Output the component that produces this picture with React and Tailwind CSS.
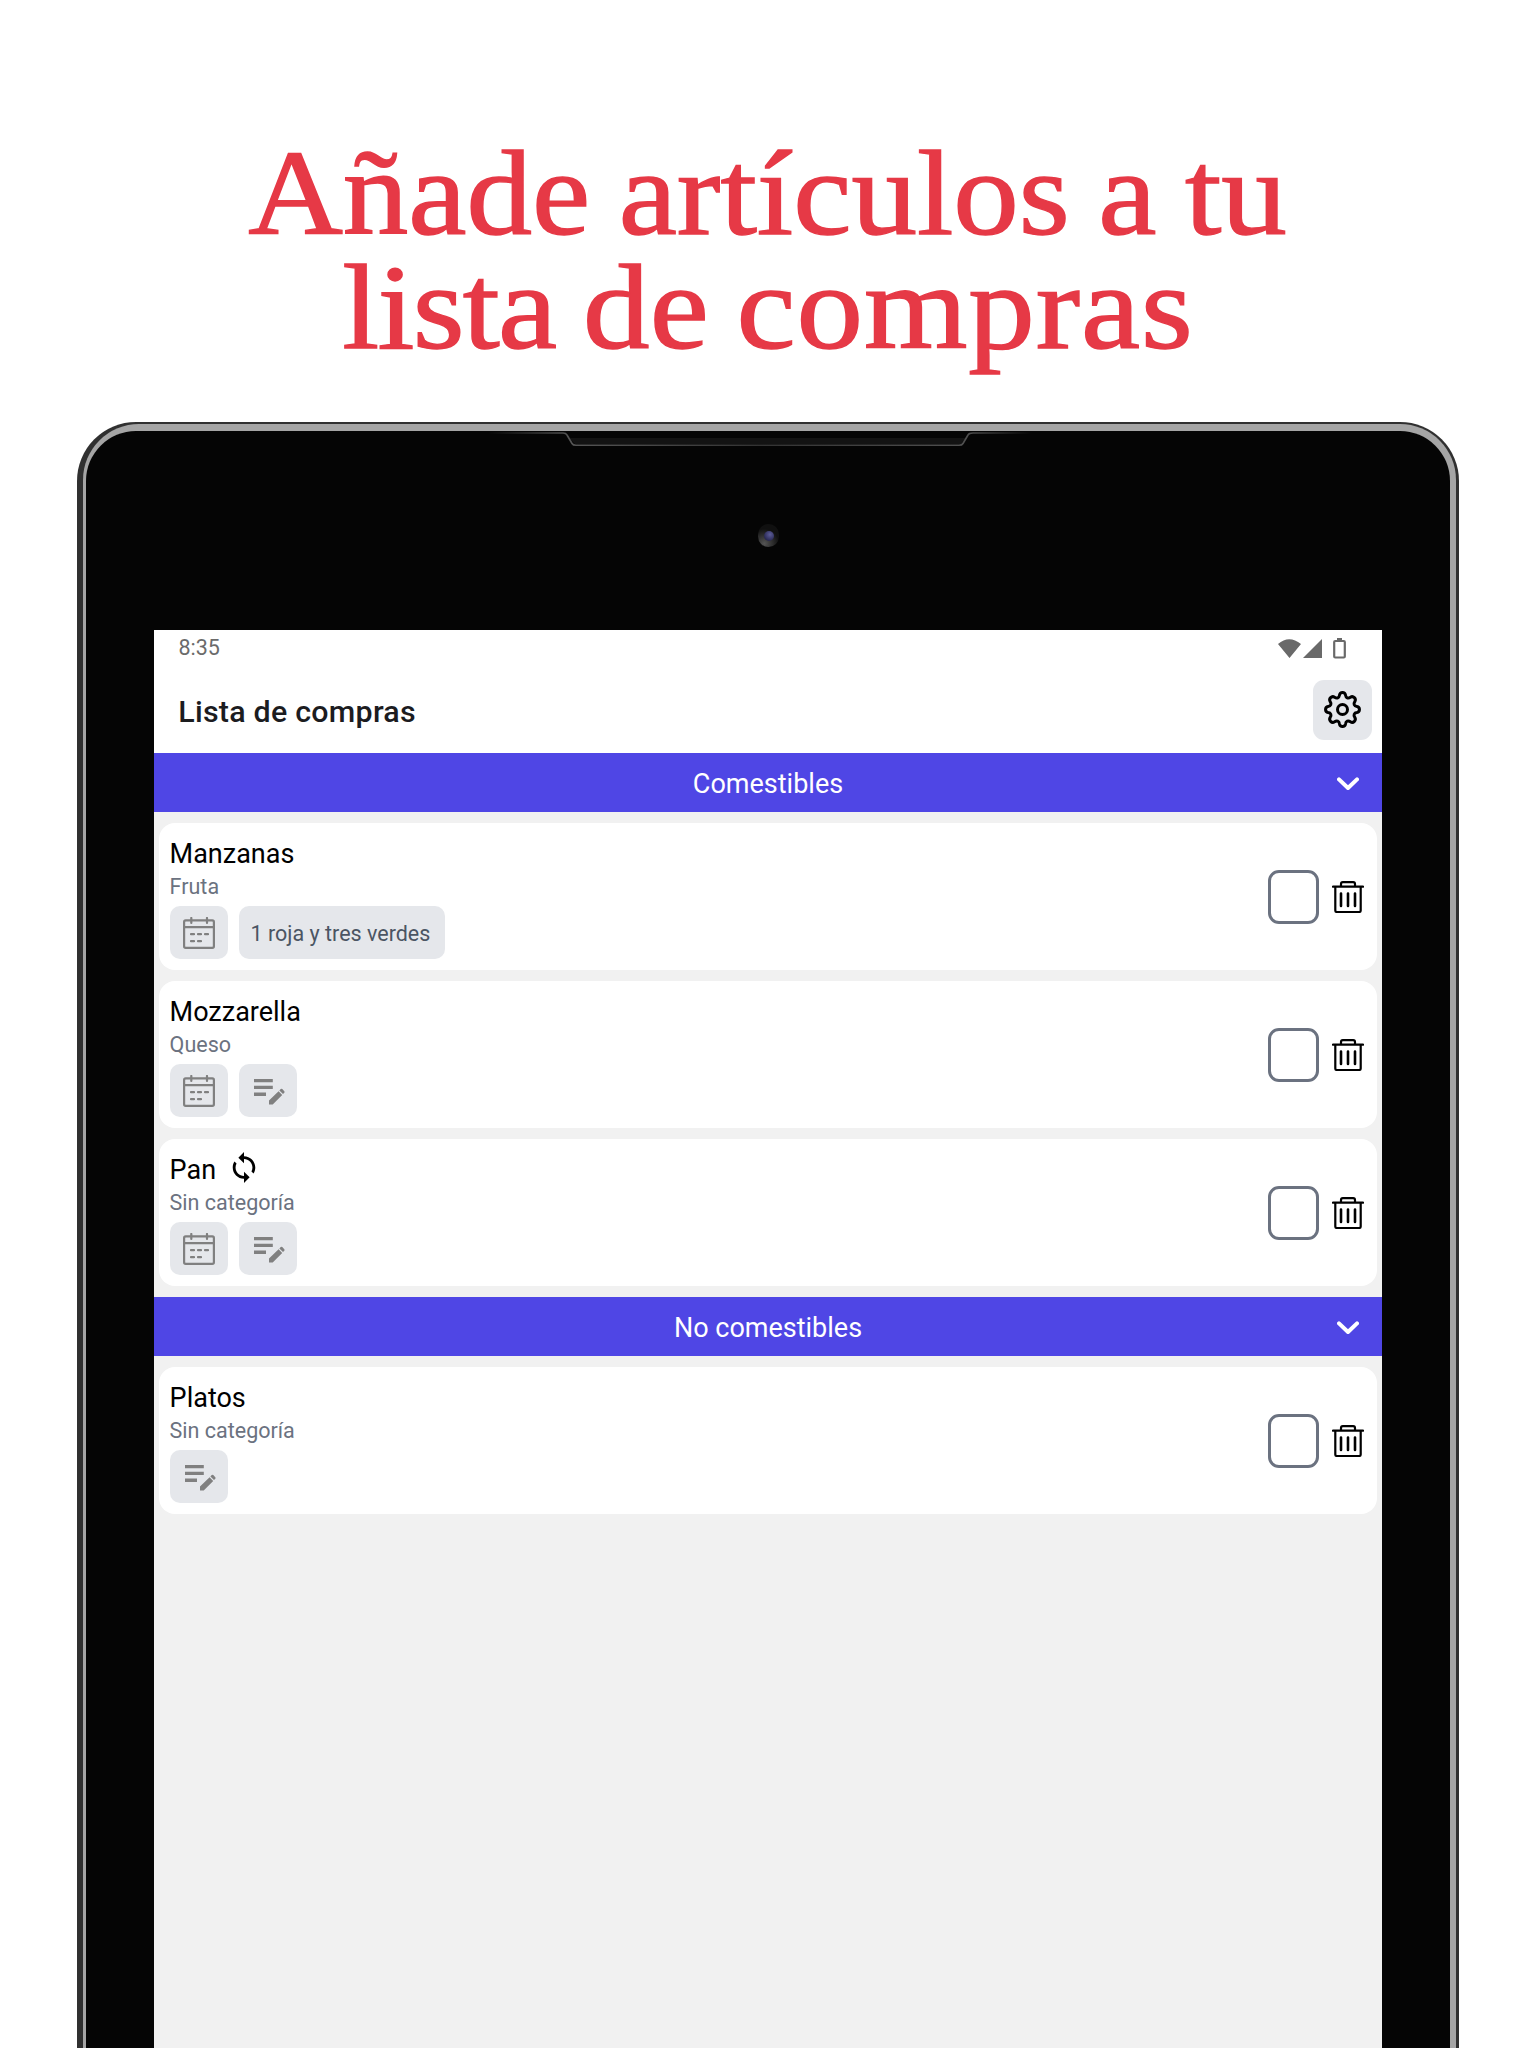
import React from "react";

function Gear() {
  return (
    <svg viewBox="-0.5 -0.5 37 37" className="mb-px h-[37px] w-[37px]" fill="none" stroke="#000" strokeWidth="3" strokeLinejoin="round">
      <circle cx="18" cy="18" r="5" />
      <path d="M15 3.6C15.6 0.2 20.4 0.2 21 3.6C21.4 6.4 23.6 7.3 25.9 5.7C28.8 3.9 32.1 7.2 30.3 10.1C28.7 12.4 29.6 14.6 32.4 15C35.8 15.6 35.8 20.4 32.4 21C29.6 21.4 28.7 23.6 30.3 25.9C32.1 28.8 28.8 32.1 25.9 30.3C23.6 28.7 21.4 29.6 21 32.4C20.4 35.8 15.6 35.8 15 32.4C14.6 29.6 12.4 28.7 10.1 30.3C7.2 32.1 3.9 28.8 5.7 25.9C7.3 23.6 6.4 21.4 3.6 21C0.2 20.4 0.2 15.6 3.6 15C6.4 14.6 7.3 12.4 5.7 10.1C3.9 7.2 7.2 3.9 10.1 5.7C12.4 7.3 14.6 6.4 15 3.6Z" />
    </svg>
  );
}

function Trash() {
  return (
    <svg viewBox="0 0 32 32" className="h-8 w-8" fill="none" stroke="#000" strokeWidth="2.2" strokeLinecap="round" strokeLinejoin="round">
      <path d="M1 5.6H31M3.3 6V29.5Q3.3 31 4.8 31H27.2Q28.7 31 28.7 29.5V6M9 5V3Q9 1.2 10.8 1.2H21.2Q23 1.2 23 3V5" />
      <path d="M9 12.5V25M16 12.5V25M23 12.5V25" strokeWidth="2.6" />
    </svg>
  );
}

function CalendarIcon() {
  return (
    <svg viewBox="0 0 32 32" className="h-8 w-8" fill="none" stroke="#808080" strokeWidth="2.2" strokeLinecap="round">
      <rect x="1.1" y="3.4" width="29.8" height="27.4" rx="1.5" />
      <path d="M1 10.2H31M8.3 1V6M24 1V6M8 17.2h3M15 17.2h3M22 17.2h3M8 24.2h3M15 24.2h3" />
    </svg>
  );
}

function NoteIcon() {
  return (
    <svg viewBox="0 0 32 28" className="ml-[3px] mt-px h-7 w-8" fill="#808080">
      <path d="M1 1.9h18.8v3.4H1zM1 8.7h18.8v3.4H1zM1 15.5h12v3.4H1z" />
      <path d="M16 27.5v-3.9L25.6 14.3l3.6 3.7-9.5 9.5zM26.4 13.4l1.3-1.3q.8-.7 1.6 0l2 2.1q.7.8 0 1.5L30 17.1z" />
    </svg>
  );
}

function SyncIcon() {
  return (
    <svg viewBox="4 1 16 22" className="mb-[6px] ml-[15.5px] h-[31px] w-[24px]" fill="#000">
      <path d="M12 4V1L8 5l4 4V6c3.31 0 6 2.69 6 6 0 1.01-.25 1.97-.7 2.8l1.46 1.46C19.54 15.03 20 13.57 20 12c0-4.42-3.58-8-8-8zm0 14c-3.31 0-6-2.69-6-6 0-1.01.25-1.97.7-2.8L5.24 7.74C4.46 8.97 4 10.43 4 12c0 4.42 3.58 8 8 8v3l4-4-4-4v3z" />
    </svg>
  );
}

function Section({ title }) {
  return (
    <div className="relative flex h-[59px] items-center justify-center bg-[#4f46e5] pt-[3px] text-[27px] text-white">
      {title}
      <svg viewBox="0 0 22 14" className="absolute right-[23.5px] top-[24px] h-[14px] w-[22px]" fill="none" stroke="#fff" strokeWidth="4" strokeLinecap="round" strokeLinejoin="round">
        <path d="M2 2.4L11 11L20 2.4" />
      </svg>
    </div>
  );
}

function Item({ name, category, calendar, note, recurring }) {
  return (
    <div className="flex h-[147px] items-center justify-between rounded-2xl bg-white pl-[10.6px] pr-[13px]">
      <div className="flex h-full flex-col pt-[13px]">
        <div className="flex h-[36px] items-center text-[27px] text-black">
          {name}
          {recurring && <SyncIcon />}
        </div>
        <div className="h-[34px] pt-[0.4px] text-[21.5px] leading-[30px] text-[#6b7280]">{category}</div>
        <div className="flex gap-[11px]">
          {calendar && (
            <div className="flex h-[53px] w-[58px] items-center justify-center rounded-[10px] bg-[#e5e7eb]">
              <CalendarIcon />
            </div>
          )}
          {note ? (
            <div className="flex h-[53px] items-center rounded-[10px] bg-[#e5e7eb] pl-[12px] pr-[15px] pt-[3px] text-[21.5px] text-[#4b5563]">{note}</div>
          ) : (
            <div className="flex h-[53px] w-[58px] items-center justify-center rounded-[10px] bg-[#e5e7eb]">
              <NoteIcon />
            </div>
          )}
        </div>
      </div>
      <div className="flex items-center gap-[13px]">
        <div className="h-[54px] w-[51px] rounded-[11px] border-3 border-[#6b7280]" />
        <Trash />
      </div>
    </div>
  );
}

function Bezel() {
  return (
    <div className="relative h-[199px]">
      <svg viewBox="0 0 560 24" className="absolute left-[326px] top-0 h-[24px] w-[560px]" fill="none">
        <defs>
          <linearGradient id="lip" x1="0" x2="1">
            <stop offset="0" stopColor="#050505" />
            <stop offset=".15" stopColor="#555" />
            <stop offset=".5" stopColor="#333" />
            <stop offset=".88" stopColor="#505050" />
            <stop offset="1" stopColor="#050505" />
          </linearGradient>
        </defs>
        <path d="M89 7H486L481 13H95Z" fill="#131313" />
        <path d="M8 2H83Q86 2 87 4L92 12.5Q93 14.3 96 14.3H479Q482 14.3 483 12.5L488 4Q489 2 493 2H552" stroke="url(#lip)" strokeWidth="1.6" />
      </svg>
      <div className="absolute left-[604px] top-[93px] flex h-[23px] w-[21px] items-center justify-center rounded-full bg-[radial-gradient(circle_at_30%_85%,#555,#101010_60%)]">
        <div className="h-[10px] w-[10px] rounded-full bg-[radial-gradient(circle_at_60%_35%,#5c5c98,#25254f_75%)]" />
      </div>
    </div>
  );
}

export default function App() {
  return (
    <div className="flex h-[2048px] w-[1536px] flex-col overflow-hidden bg-white font-['Roboto',sans-serif]">
      <h1 className="flex h-[422px] shrink-0 flex-col items-center pt-[136px] font-['Liberation_Serif',serif] text-[121px] leading-[114px] text-[#e63946] [-webkit-text-stroke:1.4px_#e63946]">
        <span className="scale-x-[1.083] whitespace-nowrap [word-spacing:-4px]">Añade artículos a tu</span>
        <span className="scale-x-[1.1] whitespace-nowrap [word-spacing:-5px]">
          <span className="tracking-[-1.6px]">lista</span> de <span className="tracking-[0.8px]">compras</span>
        </span>
      </h1>
      <div className="ml-[77px] h-[1700px] w-[1382px] shrink-0 rounded-t-[59px] bg-[#303030] pl-[6px] pr-[3px] pt-[2px]">
        <div className="h-full rounded-t-[56px] bg-[#a5a5a5] pl-[3px] pr-[6px] pt-[7px]">
          <div className="h-full rounded-t-[50px] bg-[#050505] px-[68px]">
            <Bezel />
            <div className="h-[1500px] bg-[#f1f1f1]">
              <div className="h-[123px] bg-white">
                <div className="flex h-[37px] items-center justify-between pl-[24.5px] pr-[35.5px] text-[21.5px] text-[#6b6b6b]">
                  <span>8:35</span>
                  <svg viewBox="0 0 70 22" className="h-[22px] w-[70px]" fill="#696969">
                    <path d="M1 6Q12 -3.5 24 6L12.5 20ZM45 1V20H26Z" />
                    <path d="M60 0h5v2h-5z" />
                    <rect x="57.2" y="3" width="10.6" height="16.5" rx="1" fill="none" stroke="#696969" strokeWidth="2.2" />
                  </svg>
                </div>
                <div className="flex items-center justify-between pl-[24.3px] pr-[10px] pt-[13px] text-[30.4px] font-medium tracking-[0.24px] text-[#1c1c1f]">
                  <span className="pt-[3px]">Lista de compras</span>
                  <div className="flex h-[60px] w-[59px] items-center justify-center rounded-[11px] bg-[#e5e7eb]">
                    <Gear />
                  </div>
                </div>
              </div>
              <Section title="Comestibles" />
              <div className="flex flex-col gap-[11px] px-[5px] py-[11px]">
                <Item name="Manzanas" category="Fruta" calendar note="1 roja y tres verdes" />
                <Item name="Mozzarella" category="Queso" calendar />
                <Item name="Pan" category="Sin categoría" calendar recurring />
              </div>
              <Section title="No comestibles" />
              <div className="px-[5px] py-[11px]">
                <Item name="Platos" category="Sin categoría" />
              </div>
            </div>
          </div>
        </div>
      </div>
    </div>
  );
}
